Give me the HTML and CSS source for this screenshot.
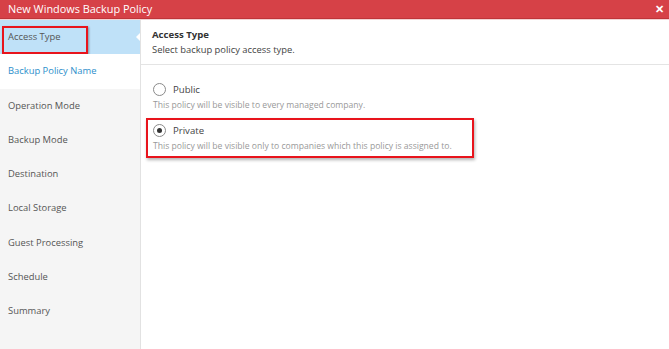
FILE: index.html
```html
<!DOCTYPE html>
<html lang="en">
<head>
    <meta charset="UTF-8">
    <title>New Windows Backup Policy</title>
    <link rel="stylesheet" href="styles.css">
</head>
<body>

<div class="dialog">
    <div class="titlebar">
        <span>New Windows Backup Policy</span>
        <span class="close">&#10005;</span>
    </div>

    <div class="dialog-body">
        <div class="sidebar">
            <div class="nav-item active">
                <span>Access Type</span>
                <div class="mark"></div>
            </div>
            <div class="nav-item next">Backup Policy Name</div>
            <div class="nav-item">Operation Mode</div>
            <div class="nav-item">Backup Mode</div>
            <div class="nav-item">Destination</div>
            <div class="nav-item">Local Storage</div>
            <div class="nav-item">Guest Processing</div>
            <div class="nav-item">Schedule</div>
            <div class="nav-item">Summary</div>
        </div>

        <div class="main">
            <div class="section-head">
                <div class="section-title">Access Type</div>
                <div class="section-sub">Select backup policy access type.</div>
            </div>

            <div class="options">
                <div class="option">
                    <div class="option-row">
                        <span class="radio"></span>
                        <span class="option-label">Public</span>
                    </div>
                    <div class="option-desc">This policy will be visible to every managed company.</div>
                </div>

                <div class="option highlight">
                    <div class="option-row">
                        <span class="radio checked"></span>
                        <span class="option-label">Private</span>
                    </div>
                    <div class="option-desc">This policy will be visible only to companies which this policy is assigned to.</div>
                </div>
            </div>
        </div>
    </div>
</div>

</body>
</html>
```

FILE: styles.css
```css
body {
    margin: 0;
    padding: 0;
    font-family: "Open Sans", "Noto Sans", sans-serif;
    background: #fff;
}

.dialog {
    width: 669px;
    height: 349px;
    display: flex;
    flex-direction: column;
    overflow: hidden;
}

.titlebar {
    height: 18px;
    background: #d64147;
    border-bottom: 1px solid #bf3439;
    box-shadow: 0 1px 0 #f3d2d3;
    color: #fff;
    font-size: 10.9px;
    line-height: 18px;
    padding: 0 5px 0 8px;
    display: flex;
    justify-content: space-between;
}

.close {
    font-size: 11px;
    font-weight: bold;
}

.dialog-body {
    flex: 1;
    display: flex;
    margin-top: 1px;
}

.sidebar {
    width: 140px;
    background: #f5f5f5;
    border-right: 1px solid #e2e2e2;
}

.nav-item {
    height: 34.3px;
    line-height: 34.3px;
    padding-left: 8px;
    font-size: 9.4px;
    color: #555;
    position: relative;
}

.nav-item.active {
    background: #bfe1f8;
    line-height: 33px;
}

.nav-item.active::after {
    content: "";
    position: absolute;
    right: 0;
    top: 13px;
    border-top: 4px solid transparent;
    border-bottom: 4px solid transparent;
    border-right: 4px solid #fff;
}

.nav-item.next {
    background: #fff;
    color: #2d8fcb;
}

.mark {
    position: absolute;
    left: 2px;
    top: 6px;
    width: 82px;
    height: 24px;
    border: 2px solid #e8141c;
    box-shadow: 1px 1px 2px rgba(0, 0, 0, 0.35);
}

.main {
    flex: 1;
    background: #fff;
}

.section-head {
    padding: 7px 11px 6px;
    border-bottom: 1px solid #e4e4e4;
}

.section-title {
    font-size: 9.6px;
    font-weight: bold;
    color: #333;
    line-height: 15px;
}

.section-sub {
    font-size: 9.4px;
    color: #444;
    line-height: 16px;
}

.options {
    padding: 12px 0 0 5px;
}

.option {
    width: 319px;
    padding: 1px 0 2px 5px;
    border: 2px solid transparent;
}

.option.highlight {
    margin-top: 1px;
    border-color: #e8141c;
    box-shadow: 1px 2px 3px rgba(0, 0, 0, 0.3);
}

.option-row {
    display: flex;
    align-items: center;
    gap: 7px;
    height: 18px;
}

.radio {
    width: 11px;
    height: 11px;
    border: 1px solid #8a8a8a;
    border-radius: 50%;
    background: #fff;
    position: relative;
}

.radio.checked::after {
    content: "";
    position: absolute;
    left: 3px;
    top: 3px;
    width: 5px;
    height: 5px;
    border-radius: 50%;
    background: #333;
}

.option-label {
    font-size: 9.6px;
    color: #444;
}

.option-desc {
    font-size: 8.6px;
    color: #999;
    line-height: 15px;
}
```
